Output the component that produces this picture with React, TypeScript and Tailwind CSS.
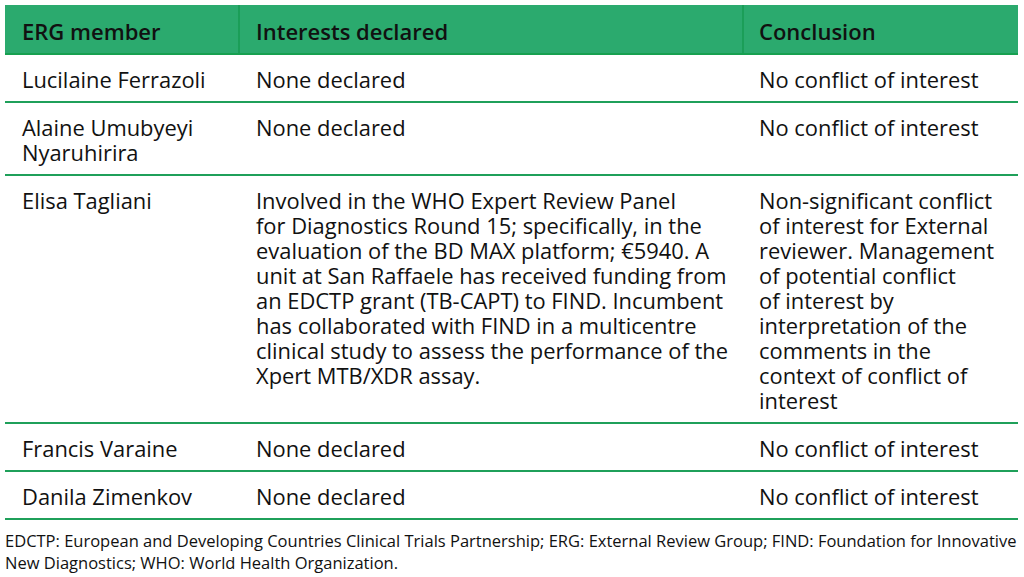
const rows = [
  {
    member: ["Lucilaine Ferrazoli"],
    interests: ["None declared"],
    conclusion: ["No conflict of interest"],
  },
  {
    member: ["Alaine Umubyeyi", "Nyaruhirira"],
    interests: ["None declared"],
    conclusion: ["No conflict of interest"],
  },
  {
    member: ["Elisa Tagliani"],
    interests: [
      "Involved in the WHO Expert Review Panel",
      "for Diagnostics Round 15; specifically, in the",
      "evaluation of the BD MAX platform; €5940. A",
      "unit at San Raffaele has received funding from",
      "an EDCTP grant (TB-CAPT) to FIND. Incumbent",
      "has collaborated with FIND in a multicentre",
      "clinical study to assess the performance of the",
      "Xpert MTB/XDR assay.",
    ],
    conclusion: [
      "Non-significant conflict",
      "of interest for External",
      "reviewer. Management",
      "of potential conflict",
      "of interest by",
      "interpretation of the",
      "comments in the",
      "context of conflict of",
      "interest",
    ],
  },
  {
    member: ["Francis Varaine"],
    interests: ["None declared"],
    conclusion: ["No conflict of interest"],
  },
  {
    member: ["Danila Zimenkov"],
    interests: ["None declared"],
    conclusion: ["No conflict of interest"],
  },
];

function Lines({ lines }: { lines: string[] }) {
  return (
    <>
      {lines.map((l, i) => (
        <div key={i} className="whitespace-nowrap">
          {l}
        </div>
      ))}
    </>
  );
}

export default function App() {
  return (
    <div
      className="w-[1024px] h-[577px] bg-white text-[#111] overflow-hidden"
      style={{ fontFamily: '"Open Sans", "Noto Sans", sans-serif' }}
    >
      <div className="pt-[5px] pl-[5px] w-[1018px]">
        <div className="grid grid-cols-[235px_504px_273px] bg-[#2baa6e] border-b-2 border-[#17a050] h-[50px] text-[22px] font-semibold leading-[25px]">
          <div className="pl-[17px] pt-[4px] flex items-center border-r-2 border-[#1b9e58]">ERG member</div>
          <div className="pl-[16px] pt-[4px] flex items-center border-r-2 border-[#1b9e58]">Interests declared</div>
          <div className="pl-[15px] pt-[4px] flex items-center">Conclusion</div>
        </div>
        {rows.map((r, i) => (
          <div
            key={i}
            className="grid grid-cols-[235px_504px_273px] border-b-2 border-[#1fa05a] text-[21.9px] leading-[25px] pt-[12px] pb-[9px]"
          >
            <div className="pl-[17px]">
              <Lines lines={r.member} />
            </div>
            <div className="pl-[16px]">
              <Lines lines={r.interests} />
            </div>
            <div className="pl-[15px]">
              <Lines lines={r.conclusion} />
            </div>
          </div>
        ))}
        <div className="text-[16.5px] leading-[22px] pt-[10px]">
          EDCTP: European and Developing Countries Clinical Trials Partnership; ERG: External Review Group; FIND: Foundation for Innovative New Diagnostics; WHO: World Health Organization.
        </div>
      </div>
    </div>
  );
}
